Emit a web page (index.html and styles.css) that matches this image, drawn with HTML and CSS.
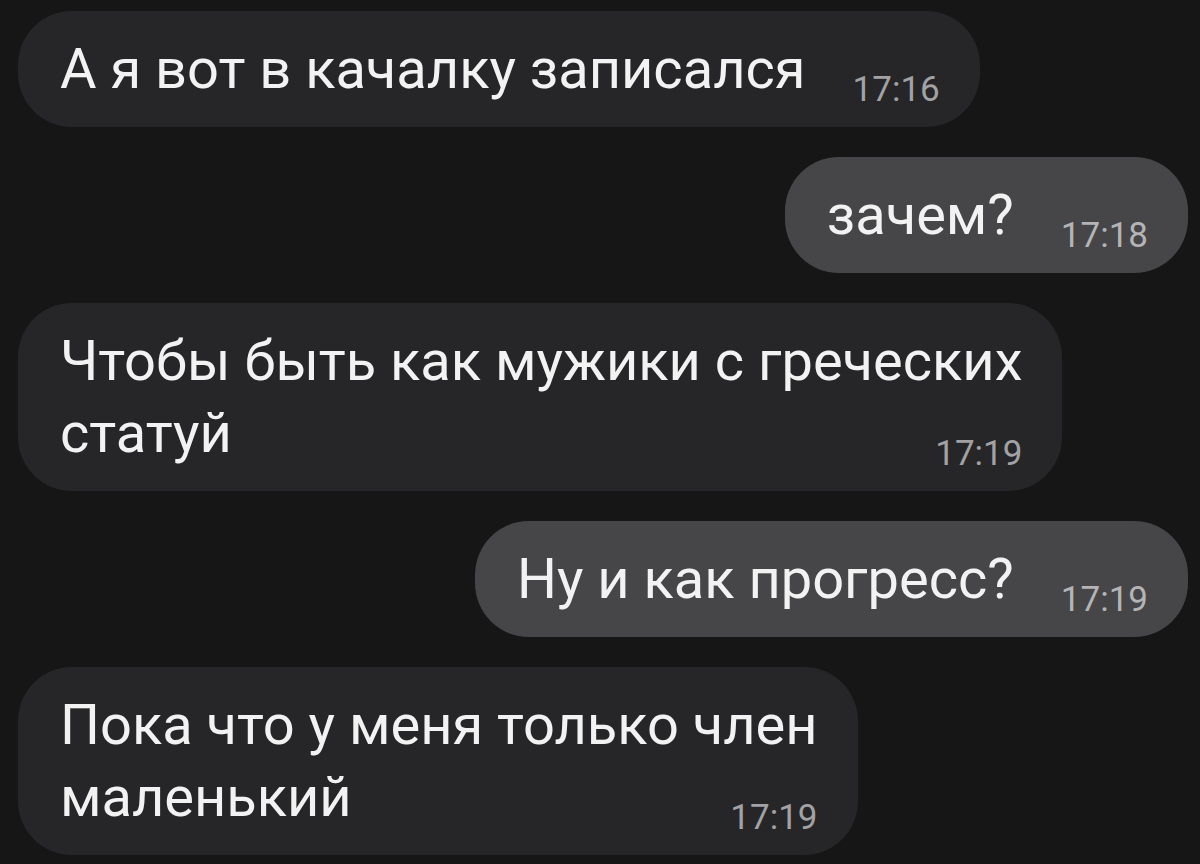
FILE: index.html
```html
<!DOCTYPE html>
<html lang="ru">
  <head>
    <title>Чат</title>
    <meta charset="UTF-8">
    <link rel="stylesheet" href="styles.css">
  </head>
  <body>
    <main class="chat">
      <div class="row in">
        <div class="bubble">А я вот в качалку записался<span class="time">17:16</span></div>
      </div>
      <div class="row out">
        <div class="bubble">зачем?<span class="time">17:18</span></div>
      </div>
      <div class="row in">
        <div class="bubble">Чтобы быть как мужики с греческих<br>статуй<span class="time">17:19</span></div>
      </div>
      <div class="row out">
        <div class="bubble">Ну и как прогресс?<span class="time">17:19</span></div>
      </div>
      <div class="row in">
        <div class="bubble">Пока что у меня только член<br>маленький<span class="time">17:19</span></div>
      </div>
    </main>
  </body>
</html>
```

FILE: styles.css
```css
/* General styles */

html {
  font-family: Roboto, "Noto Sans", sans-serif;
  font-size: 16px;
}

body {
  margin: 0;
  background-color: #161617;
  color: #f2f2f2;
}

.chat {
  display: flex;
  flex-direction: column;
  gap: 30px;
  padding: 11px 12px 0 18px;
}

.row {
  display: flex;
}

.row.out {
  justify-content: flex-end;
}

/* Message bubble */

.bubble {
  padding: 22px 40px 22px 42px;
  border-radius: 54px;
  font-size: 56px;
  line-height: 72px;
  background-color: #262628;
}

.row.out .bubble {
  background-color: #464648;
}

/* Time sits at the right end of the last line, a little below the text baseline */
.bubble .time {
  float: right;
  margin: 42px 0 0 47px;
  font-size: 35px;
  line-height: 30px;
  color: #a2a2a4;
}

.row.out .bubble .time {
  color: #b4b4b6;
}
```
